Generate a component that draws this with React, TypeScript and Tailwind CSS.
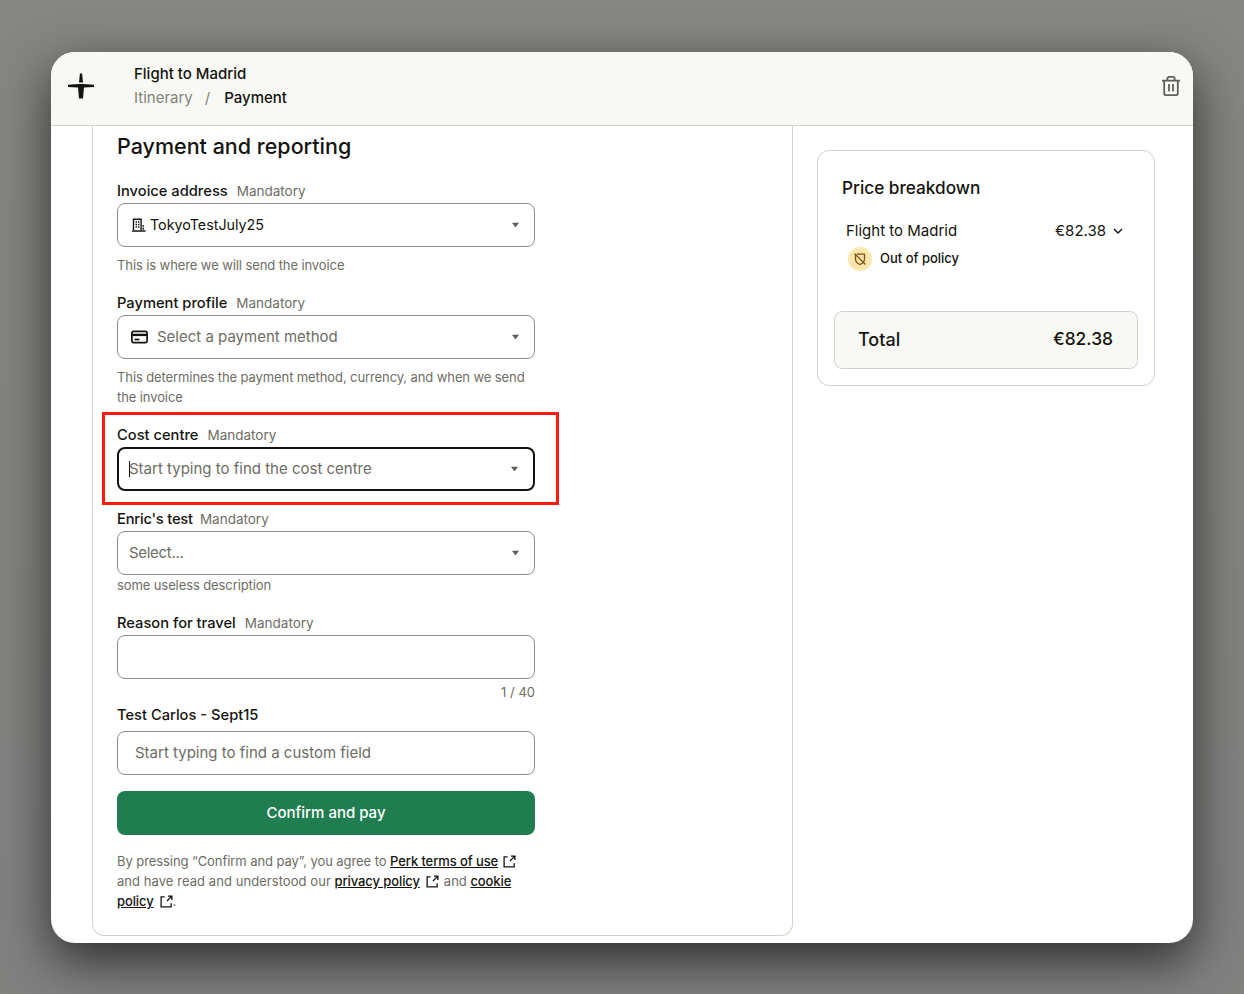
import React from "react";

const Caret = () => (
  <svg width="7" height="6" viewBox="0 0 8 6" className="shrink-0"><path d="M0.6 0.4h6.8a.4.4 0 0 1 .3.65L4.3 5.4a.4.4 0 0 1-.6 0L.3 1.05A.4.4 0 0 1 .6.4z" fill="#5f5f57" /></svg>
);

const Ext = ({ cls }: { cls: string }) => (
  <svg width="13" height="13" viewBox="0 0 14 14" fill="none" stroke="#14140f" strokeWidth="1.4" className={cls}>
    <path d="M5 2H1.2v10.8H12V9" />
    <path d="M7.5 6.5L12.5 1.5M8.5 1.2h4.3v4.3" />
  </svg>
);

const Label = ({ name, mandatory = true, tight = false }: { name: string; mandatory?: boolean; tight?: boolean }) => (
  <div className="h-5 flex items-center leading-5">
    <span className={tight ? "text-[14.7px] tracking-[-0.2px] font-medium text-[#14140f]" : "text-[14.7px] font-medium text-[#14140f]"}>{name}</span>
    {mandatory && <span className={tight ? "ml-[7px] text-[13.5px] text-[#6d6d64]" : "ml-[9px] text-[13.5px] text-[#6d6d64]"}>Mandatory</span>}
  </div>
);

const Box = ({ children, active = false }: { children?: React.ReactNode; active?: boolean }) => (
  <div className={active ? "mt-0.5 h-11 w-[418px] rounded-lg border-2 border-[#14140f] flex items-center pl-[10px] pr-[15px]" : "mt-0.5 h-11 w-[418px] rounded-lg border border-[#8f8f83] flex items-center pl-[11px] pr-[15px]"}>
    {children}
  </div>
);

const Help = ({ children, className = "" }: { children: React.ReactNode; className?: string }) => (
  <p className={`text-[13px] tracking-[-0.1px] leading-5 text-[#6d6d64] ${className}`}>{children}</p>
);

const extLink = "font-medium text-[13px] tracking-[-0.1px] text-[#14140f] underline";

export default function App() {
  return (
    <div className="h-[994px] w-[1244px] overflow-hidden bg-linear-to-b from-[#858681] to-[#818180] pt-[52px] pl-[51px] font-['Inter',sans-serif]">
      <div className="w-[1142px] h-[891px] rounded-[24px] bg-white overflow-hidden shadow-[0_18px_50px_rgba(0,0,0,0.65)] flex flex-col">
        <header className="h-[74px] shrink-0 bg-[#f8f9f4] border-b border-[#d3d3c7] flex items-center pl-[17px] pr-[13px] pb-[5px]">
          <svg width="26" height="26" viewBox="0 0 26 26" fill="#14140f" className="shrink-0">
            <path d="M11.9 0.5 H14.1 L15 9.5 H11 Z" />
            <path d="M0 11.8 L11 11 H15 L26 11.8 V14 L16 14.6 L15 25.5 H11 L10 14.6 L0 14 Z" />
          </svg>
          <div className="ml-[40px] flex-1">
            <div className="text-[15px] leading-6 font-medium text-[#14140f]">Flight to Madrid</div>
            <div className="text-[15px] leading-6 flex">
              <span className="text-[#83837a]">Itinerary</span>
              <span className="text-[#83837a] ml-3">/</span>
              <span className="ml-3.5 font-medium text-[#14140f]">Payment</span>
            </div>
          </div>
          <svg width="18" height="20" viewBox="0 0 18 20" fill="none" stroke="#5f5f57" strokeWidth="1.8" className="shrink-0">
            <path d="M0 4.6h18" />
            <path d="M2.2 4.6V17.5a1.6 1.6 0 0 0 1.6 1.6h10.4a1.6 1.6 0 0 0 1.6-1.6V4.6" />
            <path d="M5.4 4.6V2.6A1.7 1.7 0 0 1 7.1.9h3.8a1.7 1.7 0 0 1 1.7 1.7v2" />
            <path d="M7 8v7.5M11 8v7.5" />
          </svg>
        </header>
        <div className="flex flex-1 pl-[41px]">
          <section className="relative w-[701px] h-[810px] border-x border-b border-[#d3d3c7] rounded-b-xl pl-6">
            <h1 className="mt-[6px] text-[21.5px] leading-[29px] font-medium text-[#14140f]">Payment and reporting</h1>
            <div className="mt-[20px]">
              <Label name="Invoice address" />
              <Box>
                <svg width="16" height="16" viewBox="0 0 16 16" fill="none" stroke="#14140f" strokeWidth="1.4" className="shrink-0 ml-0.5">
                  <path d="M2.5 13V2.2h7.6V13M1 14h13.5" />
                  <path d="M4.6 5h1.4M7 5h1.4M4.6 7.5h1.4M7 7.5h1.4M4.6 10h1.4M7 10h1.4M11.4 9h1.6M11.4 11.6h1.6" strokeWidth="1.6" />
                </svg>
                <span className="ml-[3px] flex-1 text-[14.3px] text-[#14140f]">TokyoTestJuly25</span>
                <Caret />
              </Box>
              <Help className="mt-2">This is where we will send the invoice</Help>
            </div>
            <div className="mt-[18px]">
              <Label name="Payment profile" />
              <Box>
                <svg width="18" height="18" viewBox="0 0 18 18" fill="none" stroke="#14140f" strokeWidth="1.7" className="shrink-0 ml-0.5">
                  <rect x="0.9" y="3.4" width="15.2" height="11.2" rx="1.6" />
                  <path d="M1 6.9h15" strokeWidth="2.4" />
                  <path d="M3.5 11.5h5" />
                </svg>
                <span className="ml-2 flex-1 text-[15px] text-[#6d6d64]">Select a payment method</span>
                <Caret />
              </Box>
              <Help className="mt-2 w-[418px]">This determines the payment method, currency, and when we send the invoice</Help>
            </div>
            <div className="mt-[18px]">
              <Label name="Cost centre" />
              <Box active>
                <span className="w-px h-4 bg-[#14140f] shrink-0 -mr-px" />
                <span className="flex-1 text-[15px] text-[#6d6d64]">Start typing to find the cost centre</span>
                <Caret />
              </Box>
            </div>
            <div className="absolute left-[9px] top-[286px] w-[457px] h-[93px] border-[3px] border-[#ff1a0d]" />
            <div className="mt-[18px]">
              <Label name="Enric's test" tight />
              <Box>
                <span className="flex-1 text-[15px] tracking-[-0.3px] text-[#6d6d64]">Select...</span>
                <Caret />
              </Box>
              <Help>some useless description</Help>
            </div>
            <div className="mt-[18px]">
              <Label name="Reason for travel" />
              <Box />
              <div className="w-[418px] mt-[3px] text-right text-[13px] leading-5 text-[#6d6d64]">1 / 40</div>
            </div>
            <div className="mt-[3px]">
              <Label name="Test Carlos - Sept15" mandatory={false} />
              <div className="mt-1.5 h-11 w-[418px] rounded-lg border border-[#8f8f83] flex items-center pl-[17px] text-[15px] text-[#6d6d64]">Start typing to find a custom field</div>
            </div>
            <button className="mt-4 h-11 w-[418px] rounded-lg bg-[#1f7d50] text-white text-[15px] font-medium">Confirm and pay</button>
            <p className="mt-4 w-[418px] text-[13px] leading-5 text-[#6d6d64]">
              <span className="tracking-[-0.07px]">By pressing “Confirm and pay”, you agree to </span><a className={extLink}>Perk terms of use</a><Ext cls="inline-block align-[2px] -my-1 ml-[5px] mr-[4px]" />
              <span className="tracking-[0.06px]">and have read and understood our </span><a className={extLink}>privacy policy</a><Ext cls="inline-block align-[2px] -my-1 ml-[6px] mr-[5px]" />and <a className={extLink}>cookie policy</a><Ext cls="inline-block align-[2px] -my-1 ml-[6px]" />.
            </p>
          </section>
          <aside className="pl-6 pt-6">
            <div className="w-[338px] h-[236px] rounded-xl border border-[#d3d3c7] px-4">
              <h2 className="mt-[25px] ml-2 text-[17.2px] leading-6 font-medium text-[#14140f]">Price breakdown</h2>
              <div className="mt-[19px] ml-3 flex items-center justify-between h-6 pr-[15px]">
                <span className="text-[15px] text-[#14140f]">Flight to Madrid</span>
                <span className="flex items-center text-[15px] text-[#14140f]">€82.38
                  <svg width="10" height="6" viewBox="0 0 10 6" fill="none" stroke="#14140f" strokeWidth="1.4" className="ml-[7px]"><path d="M1 1l4 4 4-4" /></svg>
                </span>
              </div>
              <div className="mt-1 ml-[14px] flex items-center">
                <span className="w-6 h-6 rounded-full bg-[#fde6ae] flex items-center justify-center">
                  <svg width="14" height="14" viewBox="0 0 14 14" fill="none" stroke="#7a5512" strokeWidth="1.3">
                    <path d="M2.5 3V7c0 3 2.2 4.6 4.5 5.5C9.3 11.6 11.5 10 11.5 7V2.2C9 2.2 5 2 3.8 2" />
                    <path d="M1.5 1.5l11 11" />
                  </svg>
                </span>
                <span className="ml-2 text-[13px] font-medium text-[#14140f]">Out of policy</span>
              </div>
              <div className="mt-[40px] h-[58px] rounded-lg border border-[#d3d3c7] bg-[#f8f9f4] flex items-center justify-between pl-[23px] pr-6 pb-px text-[18px] font-medium text-[#14140f]">
                <span>Total</span>
                <span className="text-[17.4px]">€82.38</span>
              </div>
            </div>
          </aside>
        </div>
      </div>
    </div>
  );
}
